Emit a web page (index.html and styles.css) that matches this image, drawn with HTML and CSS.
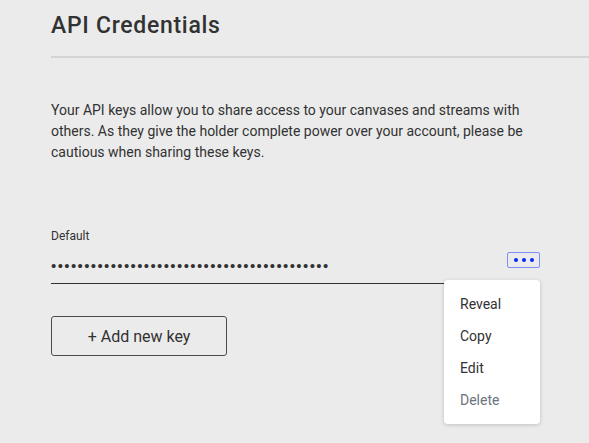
FILE: index.html
```html
<!DOCTYPE html>
<html>
<head>
<meta charset="utf-8">
<link rel="stylesheet" href="styles.css">
</head>
<body>
<div class="page">
  <header class="header">
    <h1 class="title">API Credentials</h1>
  </header>
  <div class="content">
    <p class="intro">Your API keys allow you to share access to your canvases and streams with others. As they give the holder complete power over your account, please be cautious when sharing these keys.</p>
    <div class="field">
      <label class="label">Default</label>
      <div class="input-row">
        <span class="secret">••••••••••••••••••••••••••••••••••••••••••</span>
        <button class="more" aria-label="More"><span class="dot"></span><span class="dot"></span><span class="dot"></span></button>
      </div>
      <ul class="menu">
        <li class="menu-item">Reveal</li>
        <li class="menu-item">Copy</li>
        <li class="menu-item">Edit</li>
        <li class="menu-item disabled">Delete</li>
      </ul>
    </div>
    <button class="add-btn">+ Add new key</button>
  </div>
</div>
</body>
</html>
```
FILE: styles.css
```css
* { box-sizing: border-box; }
html, body { margin: 0; padding: 0; }
body {
  background: #ebebeb;
  font-family: "Roboto", "Liberation Sans", sans-serif;
  color: #323232;
  width: 589px;
  height: 443px;
  overflow: hidden;
}
.page { padding-left: 51px; }
.header {
  padding-top: 12px;
  height: 58px;
  border-bottom: 2px solid #d3d3d3;
}
.title {
  margin: 0;
  font-size: 23px;
  line-height: 28px;
  font-weight: 500;
  color: #323232;
  letter-spacing: 0.7px;
}
.content { width: 488px; }
.intro {
  margin: 42px 0 0 0;
  font-size: 14px;
  line-height: 21px;
  color: #323232;
  width: 500px;
}
.field {
  position: relative;
  margin-top: 65px;
}
.label {
  display: block;
  font-size: 12px;
  line-height: 16px;
  color: #323232;
}
.input-row {
  display: flex;
  align-items: center;
  justify-content: space-between;
  height: 40px;
  padding-top: 4px;
  border-bottom: 1px solid #323232;
}
.secret {
  font-size: 15px;
  letter-spacing: 1.38px;
  color: #323232;
  font-family: "Liberation Sans", sans-serif;
}
.more {
  width: 33px;
  height: 16px;
  border: 1px solid #7f8dff;
  border-radius: 2px;
  background: transparent;
  padding: 0;
  margin-top: -12px;
  margin-right: -1px;
  display: flex;
  align-items: center;
  justify-content: center;
  gap: 4px;
}
.dot {
  width: 4px;
  height: 4px;
  border-radius: 50%;
  background: #0527ff;
}
.menu {
  position: absolute;
  top: 52px;
  right: -1px;
  width: 96px;
  margin: 0;
  padding: 8px 0;
  list-style: none;
  background: #fff;
  border-radius: 4px;
  box-shadow: 0 1px 4px rgba(0,0,0,0.18);
}
.menu-item {
  height: 32px;
  line-height: 32px;
  padding-left: 16px;
  font-size: 14px;
  color: #323232;
}
.menu-item.disabled { color: #6b7480; }
.add-btn {
  margin-top: 32px;
  width: 176px;
  height: 40px;
  border: 1px solid #4c4c4c;
  border-radius: 3px;
  background: transparent;
  font-family: "Roboto", "Liberation Sans", sans-serif;
  font-size: 16px;
  color: #323232;
  padding: 0;
}
```
